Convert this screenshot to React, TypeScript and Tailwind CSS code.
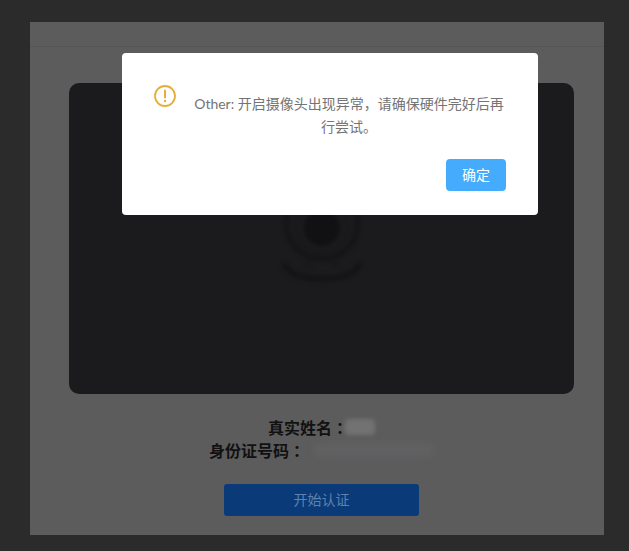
const cjk = "font-['Lato','Noto_Sans_CJK_SC',sans-serif]";
const mark = "font-['Noto_Sans_CJK_TC',sans-serif]";

function CameraIcon() {
  return (
    <svg width="110" height="110" viewBox="0 0 110 110" fill="none" className="blur-[2px]">
      <circle cx="55" cy="42" r="36" stroke="#131315" strokeWidth="4" />
      <circle cx="55" cy="46" r="26" stroke="#18181a" strokeWidth="3" />
      <circle cx="55" cy="47" r="18" fill="#111113" />
      <path d="M18 84c4 10 20 14 37 14s33-4 37-14" stroke="#131315" strokeWidth="5" strokeLinecap="round" />
      <path d="M42 80v6M68 80v6" stroke="#161618" strokeWidth="4" />
    </svg>
  );
}

export default function App() {
  return (
    <div className={`relative h-[551px] w-[629px] overflow-hidden bg-[#2b2b2c] pl-[30px] pt-[22px] ${cjk}`}>
      <div className="flex h-[513px] w-[574px] flex-col bg-[#5c5c5d]">
        <div className="h-[25px] border-b border-[#555556]" />
        <div className="flex flex-col pl-[39px] pr-[30px]">
          <div className="mt-[36px] flex h-[311px] items-center justify-center rounded-[10px] bg-[#1b1b1d]">
            <div className="mt-[-6px]">
              <CameraIcon />
            </div>
          </div>

          <div className="mt-[22px] text-center text-base font-bold leading-[23px] text-[#111111]">
            <div className="flex justify-center">
              <span>
                真实姓名<span className={mark}>：</span>
              </span>
              <span className="mt-[3px] ml-[-3px] h-[16px] w-[30px] rounded-sm bg-[#727273] blur-[2px]" />
            </div>
            <div className="flex justify-center">
              <span>
                身份证号码<span className={mark}>：</span>
              </span>
              <span className="mt-[4px] ml-[9px] h-[14px] w-[120px] rounded-sm bg-[#616162] blur-[3px]" />
            </div>
          </div>

          <button className="mx-auto mt-[22px] h-[32px] w-[195px] rounded-[3px] bg-[#0a3b78] text-sm text-[#5d82ad]">
            开始认证
          </button>
        </div>
      </div>

      <div className="absolute left-[122px] top-[53px] h-[162px] w-[416px] rounded-[4px] bg-white">
        <svg width="24" height="24" viewBox="0 0 24 24" fill="none" className="absolute left-[31px] top-[31px]">
          <circle cx="12" cy="12" r="10" stroke="#e6ad3c" strokeWidth="1.8" />
          <path d="M12 6.5v7" stroke="#e6ad3c" strokeWidth="2" strokeLinecap="round" />
          <circle cx="12" cy="17" r="1.2" fill="#e6ad3c" />
        </svg>
        <div className="flex h-full flex-col pl-[70px] pr-[32px] pt-[39px]">
          <p className="text-center text-sm leading-[23px] text-[#747474]">
            Other: 开启摄像头出现异常，请确保硬件完好后再行尝试。
          </p>
          <div className="mt-[21px] flex justify-end">
            <button className="h-[32px] w-[60px] rounded-[4px] bg-[#45abfd] text-sm text-white">确定</button>
          </div>
        </div>
      </div>
    </div>
  );
}
